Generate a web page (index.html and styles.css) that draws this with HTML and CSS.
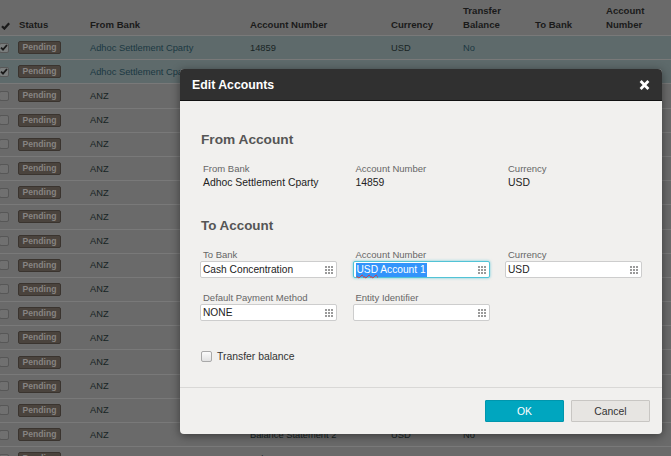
FILE: index.html
```html
<!DOCTYPE html>
<html>
<head>
<meta charset="utf-8">
<title>Edit Accounts</title>
<link rel="stylesheet" href="styles.css">
</head>
<body>
<div class="table">
  <div class="row head">
    <div class="cell chk"><svg class="hcheck" width="9" height="8" viewBox="0 0 9 8"><path d="M1 4.2 L3.4 6.6 L8.2 1.2" fill="none" stroke="#1a1a1a" stroke-width="2.2"/></svg></div>
    <div class="cell">Status</div>
    <div class="cell">From Bank</div>
    <div class="cell">Account Number</div>
    <div class="cell">Currency</div>
    <div class="cell">Transfer<br>Balance</div>
    <div class="cell">To Bank</div>
    <div class="cell">Account<br>Number</div>
  </div>
  <div class="row sel">
    <div class="cell chk"><span class="box on"><svg width="8" height="7" viewBox="0 0 8 7"><path d="M1 3.6 L3 5.6 L7 1" fill="none" stroke="#1a1a1a" stroke-width="1.8"/></svg></span></div>
    <div class="cell"><span class="badge">Pending</span></div>
    <div class="cell link">Adhoc Settlement Cparty</div>
    <div class="cell">14859</div>
    <div class="cell">USD</div>
    <div class="cell link">No</div>
    <div class="cell"></div>
    <div class="cell"></div>
  </div>
  <div class="row sel">
    <div class="cell chk"><span class="box on"><svg width="8" height="7" viewBox="0 0 8 7"><path d="M1 3.6 L3 5.6 L7 1" fill="none" stroke="#1a1a1a" stroke-width="1.8"/></svg></span></div>
    <div class="cell"><span class="badge">Pending</span></div>
    <div class="cell link">Adhoc Settlement Cparty</div>
    <div class="cell">22041</div>
    <div class="cell">USD</div>
    <div class="cell link">No</div>
    <div class="cell"></div>
    <div class="cell"></div>
  </div>
  <div class="row"><div class="cell chk"><span class="box"></span></div><div class="cell"><span class="badge">Pending</span></div><div class="cell">ANZ</div><div class="cell"></div><div class="cell"></div><div class="cell"></div><div class="cell"></div><div class="cell"></div></div>
  <div class="row"><div class="cell chk"><span class="box"></span></div><div class="cell"><span class="badge">Pending</span></div><div class="cell">ANZ</div><div class="cell"></div><div class="cell"></div><div class="cell"></div><div class="cell"></div><div class="cell"></div></div>
  <div class="row"><div class="cell chk"><span class="box"></span></div><div class="cell"><span class="badge">Pending</span></div><div class="cell">ANZ</div><div class="cell"></div><div class="cell"></div><div class="cell"></div><div class="cell"></div><div class="cell"></div></div>
  <div class="row"><div class="cell chk"><span class="box"></span></div><div class="cell"><span class="badge">Pending</span></div><div class="cell">ANZ</div><div class="cell"></div><div class="cell"></div><div class="cell"></div><div class="cell"></div><div class="cell"></div></div>
  <div class="row"><div class="cell chk"><span class="box"></span></div><div class="cell"><span class="badge">Pending</span></div><div class="cell">ANZ</div><div class="cell"></div><div class="cell"></div><div class="cell"></div><div class="cell"></div><div class="cell"></div></div>
  <div class="row"><div class="cell chk"><span class="box"></span></div><div class="cell"><span class="badge">Pending</span></div><div class="cell">ANZ</div><div class="cell"></div><div class="cell"></div><div class="cell"></div><div class="cell"></div><div class="cell"></div></div>
  <div class="row"><div class="cell chk"><span class="box"></span></div><div class="cell"><span class="badge">Pending</span></div><div class="cell">ANZ</div><div class="cell"></div><div class="cell"></div><div class="cell"></div><div class="cell"></div><div class="cell"></div></div>
  <div class="row"><div class="cell chk"><span class="box"></span></div><div class="cell"><span class="badge">Pending</span></div><div class="cell">ANZ</div><div class="cell"></div><div class="cell"></div><div class="cell"></div><div class="cell"></div><div class="cell"></div></div>
  <div class="row"><div class="cell chk"><span class="box"></span></div><div class="cell"><span class="badge">Pending</span></div><div class="cell">ANZ</div><div class="cell"></div><div class="cell"></div><div class="cell"></div><div class="cell"></div><div class="cell"></div></div>
  <div class="row"><div class="cell chk"><span class="box"></span></div><div class="cell"><span class="badge">Pending</span></div><div class="cell">ANZ</div><div class="cell"></div><div class="cell"></div><div class="cell"></div><div class="cell"></div><div class="cell"></div></div>
  <div class="row"><div class="cell chk"><span class="box"></span></div><div class="cell"><span class="badge">Pending</span></div><div class="cell">ANZ</div><div class="cell"></div><div class="cell"></div><div class="cell"></div><div class="cell"></div><div class="cell"></div></div>
  <div class="row"><div class="cell chk"><span class="box"></span></div><div class="cell"><span class="badge">Pending</span></div><div class="cell">ANZ</div><div class="cell"></div><div class="cell"></div><div class="cell"></div><div class="cell"></div><div class="cell"></div></div>
  <div class="row"><div class="cell chk"><span class="box"></span></div><div class="cell"><span class="badge">Pending</span></div><div class="cell">ANZ</div><div class="cell"></div><div class="cell"></div><div class="cell"></div><div class="cell"></div><div class="cell"></div></div>
  <div class="row"><div class="cell chk"><span class="box"></span></div><div class="cell"><span class="badge">Pending</span></div><div class="cell">ANZ</div><div class="cell"></div><div class="cell"></div><div class="cell"></div><div class="cell"></div><div class="cell"></div></div>
  <div class="row"><div class="cell chk"><span class="box"></span></div><div class="cell"><span class="badge">Pending</span></div><div class="cell">ANZ</div><div class="cell">Balance Statement 2</div><div class="cell">USD</div><div class="cell">No</div><div class="cell"></div><div class="cell"></div></div>
  <div class="row"><div class="cell chk"><span class="box"></span></div><div class="cell"><span class="badge">Pending</span></div><div class="cell">ANZ</div><div class="cell">Balance Statement 3</div><div class="cell">JPY</div><div class="cell">No</div><div class="cell"></div><div class="cell"></div></div>
</div>

<div class="modal">
  <div class="modal-head">
    <span class="modal-title">Edit Accounts</span>
    <svg class="close" width="11" height="10" viewBox="0 0 11 10"><path d="M1.6 1.1 L9.4 8.9 M9.4 1.1 L1.6 8.9" stroke="#fff" stroke-width="2.8"/></svg>
  </div>
  <div class="modal-body">
    <h2 class="section">From Account</h2>
    <div class="info">
      <div class="info-item"><div class="label">From Bank</div><div class="value">Adhoc Settlement Cparty</div></div>
      <div class="info-item"><div class="label">Account Number</div><div class="value">14859</div></div>
      <div class="info-item"><div class="label">Currency</div><div class="value">USD</div></div>
    </div>
    <h2 class="section section-to">To Account</h2>
    <div class="fields">
      <div class="field">
        <div class="label">To Bank</div>
        <div class="input"><span class="input-text">Cash Concentration</span><svg class="grid-ico" width="8" height="8" viewBox="0 0 8 8"><rect x="0" y="0" width="2" height="2"/><rect x="3" y="0" width="2" height="2"/><rect x="6" y="0" width="2" height="2"/><rect x="0" y="3" width="2" height="2"/><rect x="3" y="3" width="2" height="2"/><rect x="6" y="3" width="2" height="2"/><rect x="0" y="6" width="2" height="2"/><rect x="3" y="6" width="2" height="2"/><rect x="6" y="6" width="2" height="2"/></svg></div>
      </div>
      <div class="field">
        <div class="label">Account Number</div>
        <div class="input focus"><span class="input-text"><span class="selected"><span class="spell">USD</span> Account 1</span></span><svg class="grid-ico" width="8" height="8" viewBox="0 0 8 8"><rect x="0" y="0" width="2" height="2"/><rect x="3" y="0" width="2" height="2"/><rect x="6" y="0" width="2" height="2"/><rect x="0" y="3" width="2" height="2"/><rect x="3" y="3" width="2" height="2"/><rect x="6" y="3" width="2" height="2"/><rect x="0" y="6" width="2" height="2"/><rect x="3" y="6" width="2" height="2"/><rect x="6" y="6" width="2" height="2"/></svg></div>
      </div>
      <div class="field">
        <div class="label">Currency</div>
        <div class="input"><span class="input-text">USD</span><svg class="grid-ico" width="8" height="8" viewBox="0 0 8 8"><rect x="0" y="0" width="2" height="2"/><rect x="3" y="0" width="2" height="2"/><rect x="6" y="0" width="2" height="2"/><rect x="0" y="3" width="2" height="2"/><rect x="3" y="3" width="2" height="2"/><rect x="6" y="3" width="2" height="2"/><rect x="0" y="6" width="2" height="2"/><rect x="3" y="6" width="2" height="2"/><rect x="6" y="6" width="2" height="2"/></svg></div>
      </div>
      <div class="field">
        <div class="label">Default Payment Method</div>
        <div class="input"><span class="input-text">NONE</span><svg class="grid-ico" width="8" height="8" viewBox="0 0 8 8"><rect x="0" y="0" width="2" height="2"/><rect x="3" y="0" width="2" height="2"/><rect x="6" y="0" width="2" height="2"/><rect x="0" y="3" width="2" height="2"/><rect x="3" y="3" width="2" height="2"/><rect x="6" y="3" width="2" height="2"/><rect x="0" y="6" width="2" height="2"/><rect x="3" y="6" width="2" height="2"/><rect x="6" y="6" width="2" height="2"/></svg></div>
      </div>
      <div class="field">
        <div class="label">Entity Identifier</div>
        <div class="input"><span class="input-text"></span><svg class="grid-ico" width="8" height="8" viewBox="0 0 8 8"><rect x="0" y="0" width="2" height="2"/><rect x="3" y="0" width="2" height="2"/><rect x="6" y="0" width="2" height="2"/><rect x="0" y="3" width="2" height="2"/><rect x="3" y="3" width="2" height="2"/><rect x="6" y="3" width="2" height="2"/><rect x="0" y="6" width="2" height="2"/><rect x="3" y="6" width="2" height="2"/><rect x="6" y="6" width="2" height="2"/></svg></div>
      </div>
    </div>
    <label class="check-row"><span class="mbox"></span><span>Transfer balance</span></label>
  </div>
  <div class="modal-foot">
    <button class="btn btn-ok">OK</button>
    <button class="btn btn-cancel">Cancel</button>
  </div>
</div>
</body>
</html>
```

FILE: styles.css
```css
* { box-sizing: border-box; }
html, body { margin: 0; padding: 0; }
body {
  width: 671px;
  height: 456px;
  overflow: hidden;
  position: relative;
  background: #6a6a6a;
  font-family: "Liberation Sans", Arial, sans-serif;
}

/* background table (dimmed) */
.table { width: 671px; }
.row {
  display: grid;
  grid-template-columns: 19px 71px 160px 141px 72px 72px 71px 65px;
  height: 24.2px;
  align-items: center;
  border-bottom: 1px solid #797979;
  font-size: 9.3px;
  color: #182424;
  white-space: nowrap;
}
.row.head {
  height: 36px;
  align-items: end;
  padding-bottom: 3px;
  font-weight: bold;
  font-size: 9.6px;
  line-height: 14px;
  color: #1a1a1a;
}
.row.sel { background: #5e6a6b; }
.cell { overflow: visible; }
.chk { display: flex; align-items: center; }
.hcheck { display: block; margin: 0 0 2px 1px; }
.box {
  display: flex;
  align-items: center;
  justify-content: center;
  width: 10px;
  height: 10px;
  margin-left: -1px;
  border: 1px solid #575757;
  border-radius: 2px;
  background: #707070;
}
.box.on { background: #7a7d7d; }
.badge {
  display: inline-block;
  width: 43px;
  height: 13px;
  margin-left: -1px;
  line-height: 11px;
  text-align: center;
  font-size: 8.6px;
  font-weight: bold;
  color: #878482;
  background: #4a433d;
  border: 1px solid #3a342f;
  border-radius: 2px;
}
.link { color: #1b3842; }

/* modal */
.modal {
  position: absolute;
  left: 180px;
  top: 69px;
  width: 482px;
  background: #f1f0ee;
  border-radius: 4px;
  overflow: hidden;
  box-shadow: 0 2px 10px rgba(0, 0, 0, 0.45);
}
.modal-head {
  height: 32px;
  background: #303030;
  border-bottom: 1px solid #111;
  display: flex;
  align-items: center;
  justify-content: space-between;
  padding: 0 12px;
}
.modal-title {
  color: #fff;
  font-weight: bold;
  font-size: 12.3px;
}
.close { display: block; }
.modal-body { padding: 30px 20px 24px; }
.section {
  margin: 0;
  padding-left: 1px;
  font-size: 13.7px;
  line-height: 18px;
  font-weight: bold;
  color: #555;
}
.section-to { margin-top: 27px; font-size: 13.4px; }
.info {
  display: grid;
  grid-template-columns: repeat(3, 137px);
  column-gap: 15.5px;
  margin-top: 14px;
}
.info-item { padding-left: 3px; }
.label {
  font-size: 9.5px;
  line-height: 12px;
  color: #666;
  white-space: nowrap;
}
.value {
  font-size: 10.4px;
  line-height: 14px;
  color: #222;
  margin-top: 1px;
}
.fields {
  display: grid;
  grid-template-columns: repeat(3, 137px);
  column-gap: 15.5px;
  row-gap: 13px;
  margin-top: 13px;
}
.field .label { line-height: 13px; padding-left: 3px; }
.input {
  display: flex;
  align-items: center;
  height: 17px;
  padding: 0 3px 0 2px;
  background: #fff;
  border: 1px solid #cdcdcd;
  border-radius: 2px;
}
.input.focus {
  border-color: #52c3d6;
  box-shadow: 0 0 3px rgba(0, 170, 200, 0.55);
}
.input-text {
  flex: 1;
  font-size: 10.2px;
  color: #222;
  white-space: nowrap;
}
.selected {
  background: #3294fb;
  color: #fff;
  padding: 1px 1px 2px;
}
.spell {
  text-decoration: underline wavy #e03030;
  text-decoration-thickness: 1px;
}
.grid-ico { display: block; fill: #9a9a9a; flex: none; }
.check-row {
  display: flex;
  align-items: center;
  gap: 5px;
  margin-top: 28px;
  height: 14px;
  font-size: 10.4px;
  color: #333;
}
.mbox {
  width: 11px;
  height: 11px;
  margin-left: 1px;
  border: 1px solid #a9a9a9;
  border-radius: 2px;
  background: linear-gradient(#fbfbfb, #e2e2e2);
}
.modal-foot {
  display: flex;
  justify-content: flex-end;
  gap: 7px;
  padding: 12px 12px;
  border-top: 1px solid #d9d8d6;
}
.btn {
  width: 79px;
  height: 22px;
  font-family: "Liberation Sans", Arial, sans-serif;
  font-size: 10.4px;
  border-radius: 1px;
  padding: 0;
}
.btn-ok {
  background: #00a6bf;
  border: 1px solid #0096ad;
  color: #fff;
}
.btn-cancel {
  background: #e7e5e2;
  border: 1px solid #c8c6c3;
  color: #333;
}
```
